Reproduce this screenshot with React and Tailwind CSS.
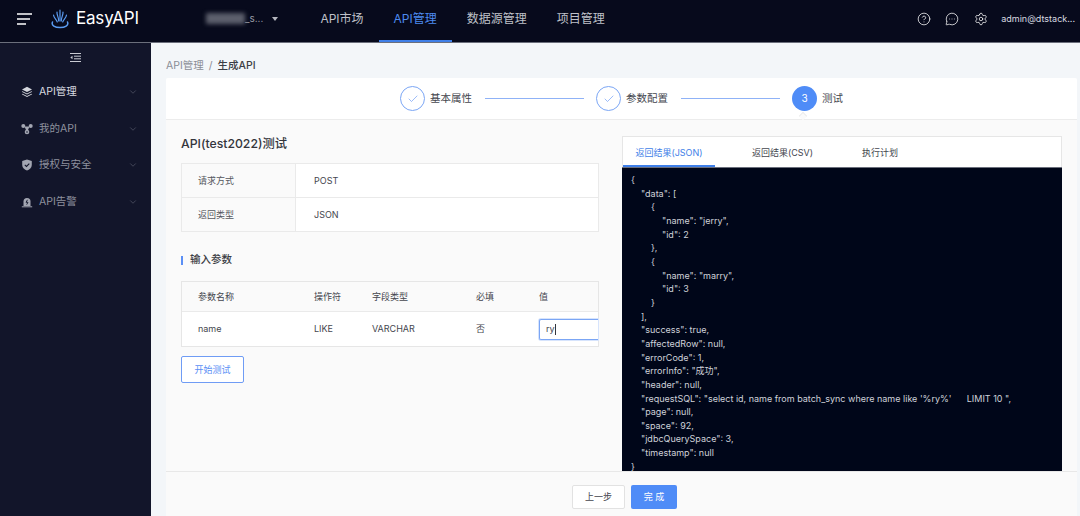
import React from "react";
import { ChevronDown, Check, CircleHelp, MessageCircleMore, Settings } from "lucide-react";

const FONT = "font-['Inter','Noto_Sans_CJK_SC',sans-serif]";

const JSON_LINES = [
    [0, "{"],
    [1, '"data": ['],
    [2, "{"],
    [3, '"name": "jerry",'],
    [3, '"id": 2'],
    [2, "},"],
    [2, "{"],
    [3, '"name": "marry",'],
    [3, '"id": 3'],
    [2, "}"],
    [1, "],"],
    [1, '"success": true,'],
    [1, '"affectedRow": null,'],
    [1, '"errorCode": 1,'],
    [1, '"errorInfo": "成功",'],
    [1, '"header": null,'],
    [1, '"requestSQL": "select id, name from batch_sync where name like \'%ry%\'      LIMIT 10 ",'],
    [1, '"page": null,'],
    [1, '"space": 92,'],
    [1, '"jdbcQuerySpace": 3,'],
    [1, '"timestamp": null'],
    [0, "}"],
];

function Logo() {
    return (
        <svg width="18" height="20" viewBox="0 0 18 20" fill="none" stroke="#5a9bf0" strokeWidth="1.2" strokeLinecap="round">
            <path d="M9 1v11" />
            <path d="M6 3c-.3 3 1.700 5 1.700 9" />
            <path d="M12 3c.3 3-1.700 5-1.700 9" />
            <path d="M2.500 6c.3 3 3 4.500 3.800 7" />
            <path d="M15.500 6c-.3 3-3 4.500-3.800 7" />
            <path d="M1.500 13c-1.500 3.500 2.500 5.500 7.500 5.500s9-2 7.500-5.500" strokeWidth="1.500" />
        </svg>
    );
}

function LayersIcon() {
    return (
        <svg width="12" height="12" viewBox="0 0 12 12" fill="#d5d7de">
            <path d="M6 .8 11 3.400 6 6 1 3.400z" />
            <path d="M1.500 5.300 6 7.600l4.500-2.300.7.500L6 8.600.8 5.800z" />
            <path d="M1.500 7.800 6 10.100l4.500-2.300.7.500L6 11.100.8 8.300z" />
        </svg>
    );
}

function ApiIcon() {
    return (
        <svg width="12" height="12" viewBox="0 0 12 12" fill="#a3a6b2">
            <circle cx="2.300" cy="3" r="2" />
            <circle cx="9.700" cy="3" r="2" />
            <circle cx="6" cy="9" r="2.300" />
            <path d="M3.500 3.500h5L7 7H5z" />
            <circle cx="6" cy="9" r=".8" fill="#12152a" />
        </svg>
    );
}

function ShieldIcon() {
    return (
        <svg width="12" height="12" viewBox="0 0 12 12">
            <path d="M6 .5 10.800 2v4c0 3-2.400 4.700-4.800 5.500C3.600 10.700 1.200 9 1.200 6V2z" fill="#a3a6b2" />
            <path d="m3.800 5.800 1.700 1.700 2.800-2.800" fill="none" stroke="#12152a" strokeWidth="1.100" />
        </svg>
    );
}

function AlarmIcon() {
    return (
        <svg width="12" height="12" viewBox="0 0 12 12">
            <path d="M2.500 10V5.500a3.500 3.500 0 0 1 7 0V10z" fill="#a3a6b2" />
            <path d="M.8 10.800h10.400" stroke="#a3a6b2" strokeWidth="1" />
            <path d="M6.500 3.800 5 6.300h2l-1.300 2.300" fill="none" stroke="#12152a" strokeWidth=".9" />
        </svg>
    );
}

function CollapseIcon() {
    return (
        <svg width="11" height="9" viewBox="0 0 11 9" fill="none" stroke="#c9cbd3" strokeWidth="1">
            <path d="M0 .5h11M4 3.200h7M4 5.800h7M0 8.500h11" />
            <path d="M2.500 2.800v3.400L.3 4.500z" fill="#c9cbd3" stroke="none" />
        </svg>
    );
}

function NavItem({ label, active }) {
    return (
        <div className={`relative flex h-full items-center px-[15px] pb-[5px] text-[12px] ${active ? "text-[#4d8af0]" : "text-[#bfc1c9]"}`}>
            {label}
            {active && <div className="absolute inset-x-0 bottom-0 h-[2px] bg-[#3f7fe8]" />}
        </div>
    );
}

function MenuItem({ icon, label, active }) {
    return (
        <div className="flex h-[36.500px] items-center pl-[21px] pr-[13px]">
            <div className="flex w-[18px] justify-start">{icon}</div>
            <span className={`flex-1 text-[10.500px] ${active ? "text-[#d8dae0]" : "text-[#8e919e]"}`}>{label}</span>
            <ChevronDown size={10} className="text-[#4c4f60]" />
        </div>
    );
}

function Step({ label, done, num }) {
    return (
        <div className="flex items-center">
            {done ? (
                <div className="flex h-[25px] w-[25px] items-center justify-center rounded-full border border-[#7ba6f5]">
                    <Check size={12} strokeWidth={1.2} className="text-[#5b8ff5]" />
                </div>
            ) : (
                <div className="flex h-[25px] w-[25px] items-center justify-center rounded-full bg-[#4f8cf7] text-[10px] text-white">{num}</div>
            )}
            <span className="ml-[5px] text-[10.500px] text-[#44464e]">{label}</span>
        </div>
    );
}

function InfoRow({ name, value, last }) {
    return (
        <div className={`flex items-center ${last ? "h-[33px]" : "h-[34px] border-b border-[#eaeaea]"}`}>
            <div className="flex h-full w-[114px] items-center border-r border-[#eaeaea] bg-[#fafafa] pl-[16px] text-[9px] text-[#55575e]">{name}</div>
            <div className="pl-[18px] text-[9px] text-[#44464e]">{value}</div>
        </div>
    );
}

function Tab({ label, active, width }) {
    return (
        <div className={`relative flex h-full items-center justify-center pt-[1px] text-[9px] ${width} ${active ? "text-[#3f7fe8]" : "text-[#44464e]"}`}>
            {label}
            {active && <div className="absolute inset-x-0 bottom-0 h-[2px] bg-[#3f7fe8]" />}
        </div>
    );
}

export default function App() {
    return (
        <div className={`flex h-[516px] w-[1080px] flex-col overflow-hidden bg-[#f3f6f9] ${FONT}`}>
            <header className="flex h-[43px] shrink-0 items-center border-b border-[#6b6f7c] bg-[#070a1c]">
                <div className="flex items-center pb-[5px]">
                    <svg width="16" height="12" viewBox="0 0 16 12" fill="none" stroke="#fff" strokeWidth="1.300" className="ml-[17px]">
                        <path d="M0 1h15M0 6h13M0 11h9" />
                    </svg>
                    <div className="ml-[18px]"><Logo /></div>
                    <span className="ml-[7px] text-[17px] tracking-[-0.2px] text-white">EasyAPI</span>
                    <div className="ml-[67px] flex items-center">
                        <div className="h-[11px] w-[39px] rounded-[1px] bg-[#5c5f6c] blur-[2px]" />
                        <span className="text-[10px] text-[#9a9ca6]">_s...</span>
                        <div className="ml-[9px] h-0 w-0 border-x-[3px] border-t-[4px] border-x-transparent border-t-[#b5b7bf]" />
                    </div>
                </div>
                <nav className="ml-[27px] flex h-full">
                    <NavItem label="API市场" />
                    <NavItem label="API管理" active />
                    <NavItem label="数据源管理" />
                    <NavItem label="项目管理" />
                </nav>
                <div className="ml-auto flex items-center pb-[5px] pr-[5px]">
                    <CircleHelp size={14} strokeWidth={1.300} className="text-white" />
                    <MessageCircleMore size={14} strokeWidth={1.300} className="ml-[14px] text-white" />
                    <Settings size={14} strokeWidth={1.300} className="ml-[15px] text-white" />
                    <span className="ml-[13px] text-[9px] text-[#d8dae0]">admin@dtstack...</span>
                </div>
            </header>
            <div className="flex min-h-0 flex-1">
                <aside className="w-[151px] shrink-0 bg-[#12152a]">
                    <div className="flex h-[28px] items-center justify-center"><CollapseIcon /></div>
                    <div className="pt-[3px]">
                        <MenuItem icon={<LayersIcon />} label="API管理" active />
                        <MenuItem icon={<ApiIcon />} label="我的API" />
                        <MenuItem icon={<ShieldIcon />} label="授权与安全" />
                        <MenuItem icon={<AlarmIcon />} label="API告警" />
                    </div>
                </aside>
                <main className="min-w-0 flex-1 pl-[15px] pr-[3px]">
                    <div className="flex h-[35px] items-center pt-[11px] text-[10.500px]">
                        <span className="text-[#8a8d96]">API管理</span>
                        <span className="mx-[5px] text-[#8a8d96]">/</span>
                        <span className="font-medium text-[#3c3e45]">生成API</span>
                    </div>
                    <div className="flex h-[438px] flex-col rounded-t-[2px] bg-[#fafafa]">
                        <div className="relative flex h-[42px] shrink-0 items-center rounded-t-[2px] border-b border-[#ececec] bg-white pl-[234px]">
                            <Step label="基本属性" done />
                            <div className="mx-[12.500px] h-px w-[99px] bg-[#8fb2f7]" />
                            <Step label="参数配置" done />
                            <div className="mx-[12.500px] h-px w-[99px] bg-[#8fb2f7]" />
                            <Step label="测试" num="3" />
                            <div className="absolute bottom-[-1px] left-[634px] h-[6px] w-[6px] translate-y-[-1px] rotate-45 border-l border-t border-[#ececec] bg-[#fafafa]" />
                        </div>
                        <div className="flex min-h-0 flex-1">
                            <div className="w-[456px] shrink-0 pl-[15px] pr-[8px]">
                                <div className="flex h-[43px] items-center pt-[6px] text-[12.250px] font-medium text-[#33353c]">API(test2022)测试</div>
                                <div className="w-[418px] border border-[#eaeaea] bg-white">
                                    <InfoRow name="请求方式" value="POST" />
                                    <InfoRow name="返回类型" value="JSON" last />
                                </div>
                                <div className="mt-[21px] flex h-[14px] items-center text-[10.500px] font-medium text-[#3c3e45]">
                                    <div className="mr-[7px] h-[9px] w-[2px] bg-[#5b8ff5]" />
                                    输入参数
                                </div>
                                <div className="mt-[14px] w-[418px] border border-[#e6e6e6] bg-white text-[9px]">
                                    <div className="flex h-[30px] items-center border-b border-[#eaeaea] bg-[#fafafa] text-[#44464e]">
                                        <div className="w-[132px] pl-[16px]">参数名称</div>
                                        <div className="w-[58px]">操作符</div>
                                        <div className="w-[104px]">字段类型</div>
                                        <div className="w-[63px]">必填</div>
                                        <div>值</div>
                                    </div>
                                    <div className="flex h-[34px] items-center text-[#44464e]">
                                        <div className="w-[132px] pl-[16px]">name</div>
                                        <div className="w-[58px]">LIKE</div>
                                        <div className="w-[104px]">VARCHAR</div>
                                        <div className="w-[63px]">否</div>
                                        <div className="flex h-[21px] flex-1 items-center rounded-l-[2px] border border-r-0 border-[#7ba6f5] pl-[6px] shadow-[0_0_0_1px_#d7e4fc]">
                                            ry<span className="h-[11px] w-px bg-[#33353c]" />
                                        </div>
                                    </div>
                                </div>
                                <button className="mt-[9px] h-[27px] w-[63px] rounded-[2px] border border-[#6f9cf5] bg-white text-[9px] text-[#5b8ff5]">开始测试</button>
                            </div>
                            <div className="flex h-[335px] w-[440px] shrink-0 flex-col self-end">
                                <div className="flex h-[31px] shrink-0 border border-b-0 border-[#e6e6e6] bg-white">
                                    <Tab label="返回结果(JSON)" width="w-[92px]" active />
                                    <Tab label="返回结果(CSV)" width="w-[103px] ml-[16px]" />
                                    <Tab label="执行计划" width="w-[78px] ml-[7px]" />
                                </div>
                                <pre className={`min-h-0 flex-1 overflow-hidden border-t border-[#6b6f7c] bg-[#000619] pl-[9px] pt-[5px] text-[9px] leading-[13.650px] text-[#cfd2da] ${FONT}`}>
                                    {JSON_LINES.map(([lvl, txt], i) => (
                                        <div key={i} className={lvl === 0 ? "" : lvl === 1 ? "pl-[10px]" : lvl === 2 ? "pl-[20px]" : "pl-[31px]"}>{txt}</div>
                                    ))}
                                </pre>
                            </div>
                        </div>
                        <div className="flex h-[45px] shrink-0 items-start justify-center gap-[6px] border-t border-[#e8e8e8] bg-[#fafafa] pl-[6px] pt-[13px]">
                            <button className="h-[24px] w-[53px] rounded-[2px] border border-[#e2e2e2] bg-white text-[9px] text-[#44464e]">上一步</button>
                            <button className="h-[24px] w-[46px] rounded-[2px] bg-[#4f8cf7] text-[9px] text-white">完 成</button>
                        </div>
                    </div>
                </main>
            </div>
        </div>
    );
}
